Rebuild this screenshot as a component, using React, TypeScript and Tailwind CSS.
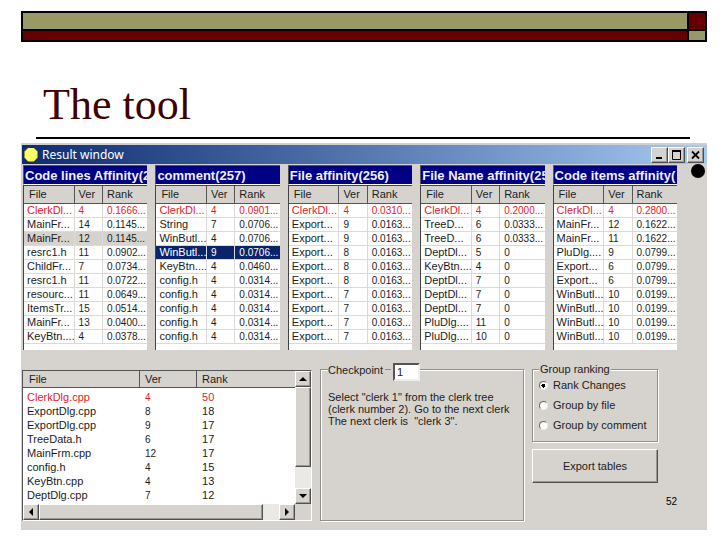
import React from "react";
import clsx from "clsx";

type Row = [string, string, string];

const panels: { title: string; gray?: number; selected?: number; rows: Row[] }[] = [
  {
    title: "Code lines Affinity(2",
    gray: 2,
    rows: [
      ["ClerkDl...", "4", "0.1666..."],
      ["MainFr...", "14", "0.1145..."],
      ["MainFr...", "12", "0.1145..."],
      ["resrc1.h", "11", "0.0902..."],
      ["ChildFr...", "7", "0.0734..."],
      ["resrc1.h", "11", "0.0722..."],
      ["resourc...", "11", "0.0649..."],
      ["ItemsTr...", "15", "0.0514..."],
      ["MainFr...", "13", "0.0400..."],
      ["KeyBtn....", "4", "0.0378..."],
    ],
  },
  {
    title: "comment(257)",
    selected: 3,
    rows: [
      ["ClerkDl...", "4", "0.0901..."],
      ["String", "7", "0.0706..."],
      ["WinButl...", "4", "0.0706..."],
      ["WinButl...", "9", "0.0706..."],
      ["KeyBtn....", "4", "0.0460..."],
      ["config.h", "4", "0.0314..."],
      ["config.h", "4", "0.0314..."],
      ["config.h", "4", "0.0314..."],
      ["config.h", "4", "0.0314..."],
      ["config.h", "4", "0.0314..."],
    ],
  },
  {
    title: "File affinity(256)",
    rows: [
      ["ClerkDl...", "4", "0.0310..."],
      ["Export...", "9", "0.0163..."],
      ["Export...", "9", "0.0163..."],
      ["Export...", "8", "0.0163..."],
      ["Export...", "8", "0.0163..."],
      ["Export...", "8", "0.0163..."],
      ["Export...", "7", "0.0163..."],
      ["Export...", "7", "0.0163..."],
      ["Export...", "7", "0.0163..."],
      ["Export...", "7", "0.0163..."],
    ],
  },
  {
    title: "File Name affinity(25",
    rows: [
      ["ClerkDl...", "4", "0.2000..."],
      ["TreeD...", "6", "0.0333..."],
      ["TreeD...", "6", "0.0333..."],
      ["DeptDl...", "5", "0"],
      ["KeyBtn....", "4", "0"],
      ["DeptDl...", "7", "0"],
      ["DeptDl...", "7", "0"],
      ["DeptDl...", "7", "0"],
      ["PluDlg....", "11", "0"],
      ["PluDlg....", "10", "0"],
    ],
  },
  {
    title: "Code items affinity(",
    rows: [
      ["ClerkDl...", "4", "0.2800..."],
      ["MainFr...", "12", "0.1622..."],
      ["MainFr...", "11", "0.1622..."],
      ["PluDlg....", "9", "0.0799..."],
      ["Export...", "6", "0.0799..."],
      ["Export...", "6", "0.0799..."],
      ["WinButl...", "10", "0.0199..."],
      ["WinButl...", "10", "0.0199..."],
      ["WinButl...", "10", "0.0199..."],
      ["WinButl...", "10", "0.0199..."],
    ],
  },
];

const files: Row[] = [
  ["ClerkDlg.cpp", "4", "50"],
  ["ExportDlg.cpp", "8", "18"],
  ["ExportDlg.cpp", "9", "17"],
  ["TreeData.h", "6", "17"],
  ["MainFrm.cpp", "12", "17"],
  ["config.h", "4", "15"],
  ["KeyBtn.cpp", "4", "13"],
  ["DeptDlg.cpp", "7", "12"],
];

const raised =
  "bg-[#d6d3ce] border border-t-white border-l-white border-r-[#505050] border-b-[#505050] shadow-[inset_-1px_-1px_0_#9a9894]";
const etched = "border border-[#918f8b] shadow-[1px_1px_0_#fff,inset_1px_1px_0_#fff]";

function HeadCell({ children, className }: { children: React.ReactNode; className?: string }) {
  return (
    <th
      className={clsx(
        "bg-[#d6d3ce] text-left font-normal p-0 pl-1 border-r border-b border-[#555] overflow-hidden",
        className
      )}
    >
      {children}
    </th>
  );
}

function Panel({ title, rows, gray, selected }: (typeof panels)[number]) {
  return (
    <section className="min-w-0 overflow-hidden">
      <h2 className="h-5 overflow-hidden whitespace-nowrap border-t border-l border-t-[#555] border-l-[#555] border-b border-b-white bg-[#000084] pl-px text-[13px] font-bold leading-[19px] text-[#f0f0f8]">
        {title}
      </h2>
      <div className="border-t border-l border-[#444] bg-white pb-[6px]">
        <table className="w-full table-fixed border-separate border-spacing-0 whitespace-nowrap">
          <thead>
            <tr className="h-[18px]">
              <HeadCell className="w-[41%] pl-[5px]">File</HeadCell>
              <HeadCell className="w-[23%]">Ver</HeadCell>
              <HeadCell className="border-r-0">Rank</HeadCell>
            </tr>
          </thead>
          <tbody>
            {rows.map((row, i) => (
              <tr
                key={i}
                className={clsx(
                  "h-[14px]",
                  i === 0 && "text-[#e0242c]",
                  i === gray && "bg-[#d6d3ce]",
                  i === selected && "bg-[#0a246a] text-white"
                )}
              >
                <td className="overflow-hidden border-r border-b border-[#dcdad6] p-0 pl-[3px]">{row[0]}</td>
                <td className="overflow-hidden border-r border-b border-[#dcdad6] p-0 pl-1 text-[10px]">{row[1]}</td>
                <td className="overflow-hidden border-b border-[#dcdad6] p-0 pl-1 text-[10px]">{row[2]}</td>
              </tr>
            ))}
          </tbody>
        </table>
      </div>
    </section>
  );
}

function ScrollButton({ label, points }: { label: string; points: string }) {
  return (
    <button aria-label={label} className={clsx("flex size-4 shrink-0 items-center justify-center", raised)}>
      <svg width="8" height="8" viewBox="0 0 8 8">
        <polygon points={points} />
      </svg>
    </button>
  );
}

function FileList() {
  return (
    <div className="mt-[7px] border border-t-[#555] border-l-[#555] border-r-white border-b-white bg-white">
      <div className="flex">
        <div className="min-w-0 flex-1 pb-[2px]">
          <table className="w-full table-fixed border-separate border-spacing-0">
            <thead>
              <tr className="h-[17px]">
                <HeadCell className="w-[43%] pl-[6px]">File</HeadCell>
                <HeadCell className="w-[21%] pl-[5px]">Ver</HeadCell>
                <HeadCell className="border-r-0 pl-[5px]">Rank</HeadCell>
              </tr>
            </thead>
            <tbody className="before:block before:h-[2px]">
              {files.map((row, i) => (
                <tr key={i} className={clsx("h-[14px]", i === 0 && "text-[#e0242c]")}>
                  <td className="p-0 pl-1">{row[0]}</td>
                  <td className="p-0 pl-[5px] text-[10px]">{row[1]}</td>
                  <td className="p-0 pl-[5px]">{row[2]}</td>
                </tr>
              ))}
            </tbody>
          </table>
        </div>
        <div className="flex w-4 flex-col bg-[#ebe9e6]">
          <ScrollButton label="Scroll up" points="0,6 4,2 8,6" />
          <div className={clsx("h-20", raised)} />
          <div className="flex-1" />
          <ScrollButton label="Scroll down" points="0,2 4,6 8,2" />
        </div>
      </div>
      <div className="flex h-4 bg-[#ebe9e6]">
        <ScrollButton label="Scroll left" points="6,0 2,4 6,8" />
        <div className={clsx("flex-1", raised)} />
        <div className="w-4" />
        <ScrollButton label="Scroll right" points="2,0 6,4 2,8" />
        <div className="w-4 bg-[#d6d3ce]" />
      </div>
    </div>
  );
}

function RankRadio({ id, label, checked }: { id: string; label: string; checked?: boolean }) {
  return (
    <div className="flex h-5 items-center gap-[5px]">
      <input
        id={id}
        type="radio"
        name="ranking"
        defaultChecked={checked}
        className="size-[9px] appearance-none rounded-full border border-t-[#666] border-l-[#666] border-r-[#eee] border-b-[#eee] bg-white checked:bg-[radial-gradient(circle,#000_0_2px,#fff_2px)]"
      />
      <label htmlFor={id}>{label}</label>
    </div>
  );
}

function TitleBar() {
  const button = clsx("flex h-4 w-[17px] items-center justify-center", raised);
  return (
    <div className="flex h-[19px] items-center bg-linear-to-r from-[#0f2b70] to-[#a6caf0] pr-[3px]">
      <svg width="18" height="18" viewBox="0 0 18 18">
        <path
          d="M6 1.500h6l4 4v6l-4 4.500h-6l-4-4.500v-6z"
          fill="#ffff6b"
          stroke="#2b2b20"
          strokeWidth="1"
          strokeLinejoin="round"
        />
      </svg>
      <h2 className="flex-1 pl-[2px] font-['Noto_Sans',sans-serif] text-xs text-white">Result window</h2>
      <button aria-label="Minimize" className={button}>
        <svg width="11" height="10" viewBox="0 0 11 10">
          <path d="M2 8h6" stroke="#000" strokeWidth="2" />
        </svg>
      </button>
      <button aria-label="Maximize" className={button}>
        <svg width="11" height="10" viewBox="0 0 11 10" fill="none" stroke="#000">
          <path d="M1.500 1v8.500h8V1" />
          <path d="M1 1h9" strokeWidth="2" />
        </svg>
      </button>
      <button aria-label="Close" className={clsx("ml-[2px]", button)}>
        <svg width="11" height="10" viewBox="0 0 11 10">
          <path d="M2 1.500l7 7M9 1.500l-7 7" stroke="#000" strokeWidth="1.800" />
        </svg>
      </button>
    </div>
  );
}

export default function App() {
  return (
    <main className="relative min-h-screen bg-white pt-[11px] pr-[13px] pl-[21px] pb-[9px] font-['Liberation_Sans',Arial,sans-serif] text-[11px] leading-[13px] text-[#1c1c1c]">
      <div className="grid grid-cols-[1fr_16px] grid-rows-[16px_9px] gap-[2px] border-2 border-black bg-black">
        <div className="bg-[#999966]" />
        <div className="bg-[#660000]" />
        <div className="bg-[#660000]" />
        <div className="bg-[#999966]" />
      </div>

      <div className="mr-[17px] ml-[15px] border-b-2 border-black pt-[37px] pb-[7px] pl-[7px]">
        <h1 className="font-['Liberation_Serif','Times_New_Roman',serif] text-[44px] leading-[51px] text-[#400000]">
          The tool
        </h1>
      </div>

      <div className="relative mt-1 border-t-2 border-l border-[#d0d0d4] bg-[#d6d3ce] pb-[9px]">
        <TitleBar />
        <div className="grid grid-cols-5 gap-2 pt-px pr-[30px] pl-px">
          {panels.map((panel) => (
            <Panel key={panel.title} {...panel} />
          ))}
        </div>

        <div className="mt-[13px] grid grid-cols-[290fr_204fr_126fr] gap-2 pr-[49px]">
          <FileList />

          <fieldset className={clsx("min-w-0 pl-[7px]", etched)}>
            <legend className="flex h-3 items-start bg-[#d6d3ce]">
              <label htmlFor="checkpoint" className="leading-[14px]">
                Checkpoint
              </label>
              <span className="mx-[2px] h-px w-[6px] self-center bg-[#918f8b]" />
              <input
                id="checkpoint"
                defaultValue="1"
                className="h-[18px] w-[27px] border-2 border-t-[#555] border-l-[#555] border-r-[#eee] border-b-[#eee] bg-white pl-[2px]"
              />
            </legend>
            <p className="pt-4 leading-3">
              Select "clerk 1" from the clerk tree
              <br />
              (clerk number 2). Go to the next clerk
              <br />
              The next clerk is &nbsp;"clerk 3".
            </p>
          </fieldset>

          <div>
            <fieldset className={clsx("h-[79px] pl-[6px]", etched)}>
              <legend className="bg-[#d6d3ce] px-px leading-3">Group ranking</legend>
              <RankRadio id="rank-changes" label="Rank Changes" checked />
              <RankRadio id="group-file" label="Group by file" />
              <RankRadio id="group-comment" label="Group by comment" />
            </fieldset>
            <button className={clsx("mt-[7px] h-[34px] w-full", raised)}>Export tables</button>
          </div>
        </div>

        {/* slide bullet and page number sit over the window */}
        <span className="absolute top-[19px] right-[2px] size-[14px] rounded-full bg-black" />
        <span className="absolute right-[30px] bottom-[22px] text-[10px] text-black">52</span>
      </div>
    </main>
  );
}
